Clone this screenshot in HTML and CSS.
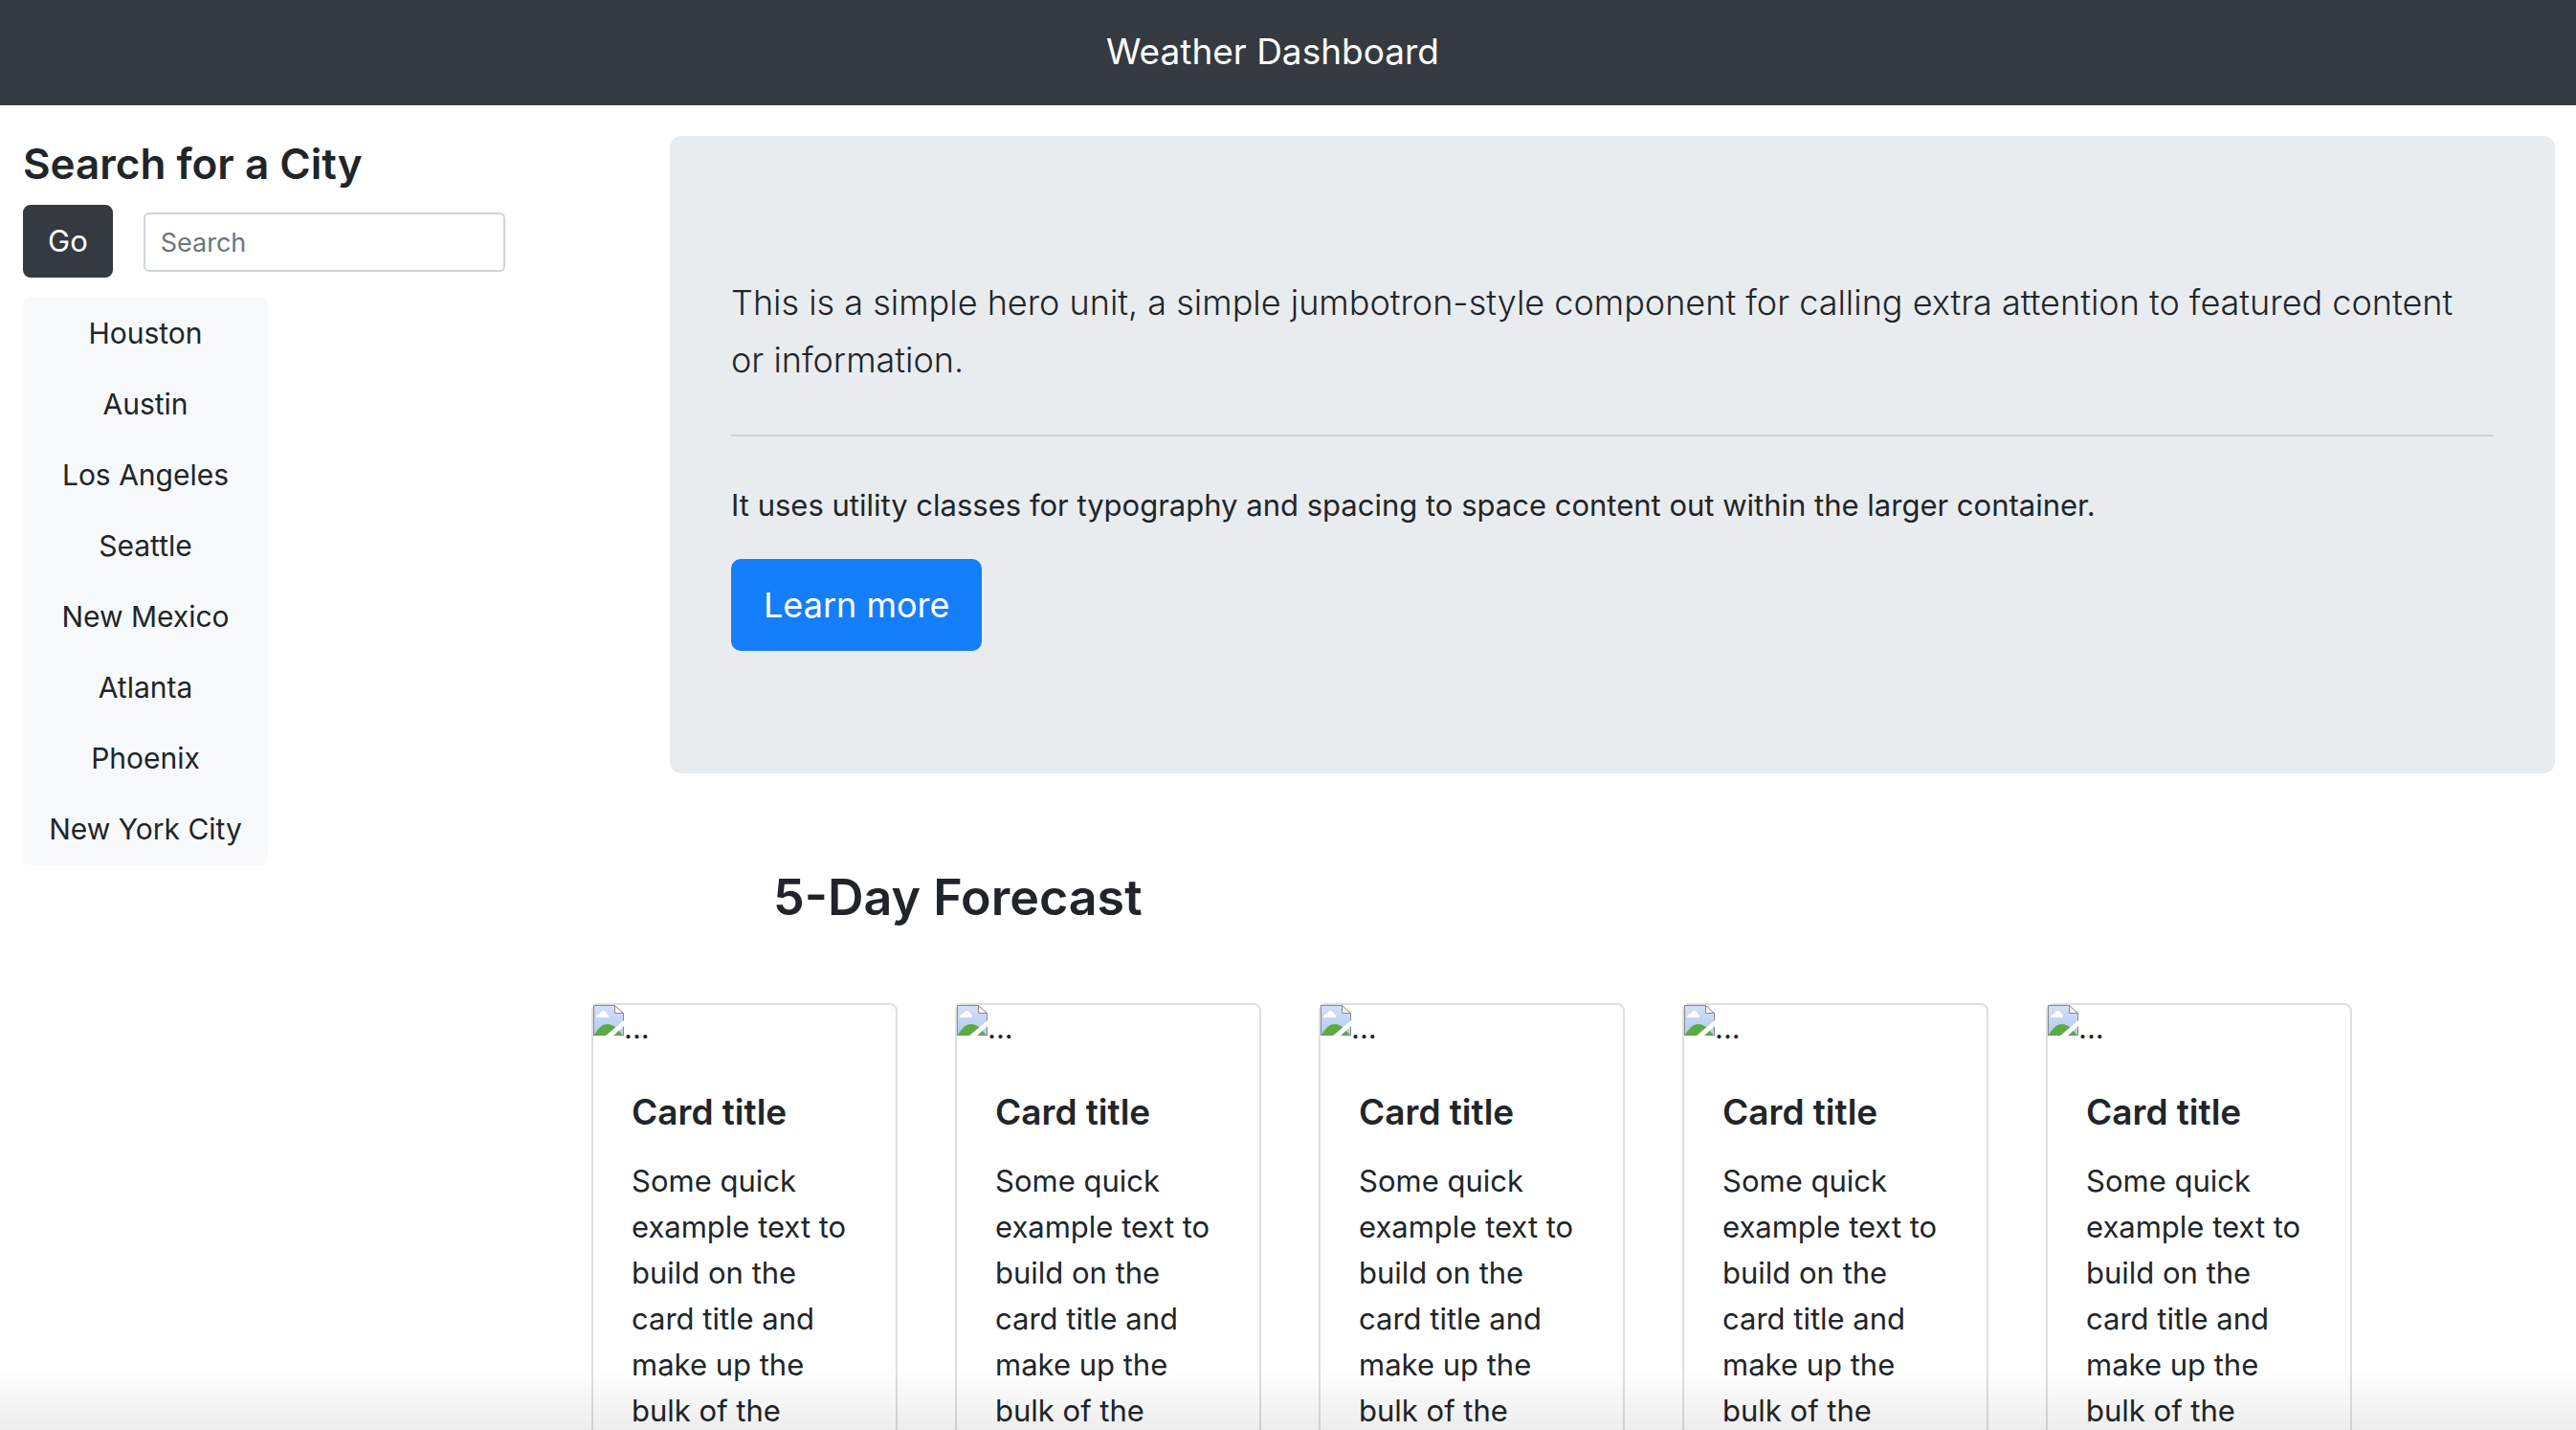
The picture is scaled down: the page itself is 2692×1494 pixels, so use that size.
FILE: index.html
```html
<!DOCTYPE html>
<html lang="en">
<head>
<meta charset="utf-8">
<title>Weather Dashboard</title>
<link rel="stylesheet" href="styles.css">
</head>
<body>
<svg class="sprite" aria-hidden="true">
  <defs>
    <linearGradient id="sky" x1="0" y1="0" x2="0" y2="1"><stop offset="0" stop-color="#d3e0f8"/><stop offset="1" stop-color="#b4caee"/></linearGradient>
    <symbol id="missing" viewBox="0 0 32 32">
      <path d="M.5.5H22.500L31.500 8.500V31.500H.5Z" fill="url(#sky)"/>
      <path d="M1 31C6 23 10 20 15 20C21 20 26 25 30 31Z" fill="#5aab41"/>
      <path d="M3 13C3 10 5 9 7 9C8 5 13 5 14 9C16 10 16 12 16 13Z" fill="#fff"/>
      <path d="M22 1V9H31Z" fill="#fff"/>
      <path d="M.5 32V.5H22.500L31.500 8.500V32M22.500.5V8.500H31.500M0 31.500H32" fill="none" stroke="#8a8a8a"/>
      <path d="M32 16V22L21 32H13Z" fill="#fff"/>
    </symbol>
  </defs>
</svg>

<header class="navbar"><a class="navbar-brand" href="#">Weather Dashboard</a></header>

<main>
  <div class="overview">
    <aside class="sidebar">
      <h3 class="sidebar-title">Search for a City</h3>
      <form class="search">
        <button class="search-button" type="button">Go</button>
        <input class="search-input" type="text" placeholder="Search" aria-label="Search">
      </form>
      <div class="cities">
        <button class="city" type="button">Houston</button>
        <button class="city" type="button">Austin</button>
        <button class="city" type="button">Los Angeles</button>
        <button class="city" type="button">Seattle</button>
        <button class="city" type="button">New Mexico</button>
        <button class="city" type="button">Atlanta</button>
        <button class="city" type="button">Phoenix</button>
        <button class="city" type="button">New York City</button>
      </div>
    </aside>
    <section class="hero">
      <p class="lead">This is a simple hero unit, a simple jumbotron-style component for calling extra attention to featured content or information.</p>
      <hr class="divider">
      <p class="hero-text">It uses utility classes for typography and spacing to space content out within the larger container.</p>
      <a class="hero-button" href="#">Learn more</a>
    </section>
  </div>

  <section class="forecast">
    <h2 class="forecast-title">5-Day Forecast</h2>
    <div class="cards">
      <article class="card">
        <div class="card-image"><svg class="missing-icon"><use href="#missing"/></svg>...</div>
        <div class="card-body"><h5 class="card-title">Card title</h5><p class="card-text">Some quick example text to build on the card title and make up the bulk of the</p></div>
      </article>
      <article class="card">
        <div class="card-image"><svg class="missing-icon"><use href="#missing"/></svg>...</div>
        <div class="card-body"><h5 class="card-title">Card title</h5><p class="card-text">Some quick example text to build on the card title and make up the bulk of the</p></div>
      </article>
      <article class="card">
        <div class="card-image"><svg class="missing-icon"><use href="#missing"/></svg>...</div>
        <div class="card-body"><h5 class="card-title">Card title</h5><p class="card-text">Some quick example text to build on the card title and make up the bulk of the</p></div>
      </article>
      <article class="card">
        <div class="card-image"><svg class="missing-icon"><use href="#missing"/></svg>...</div>
        <div class="card-body"><h5 class="card-title">Card title</h5><p class="card-text">Some quick example text to build on the card title and make up the bulk of the</p></div>
      </article>
      <article class="card">
        <div class="card-image"><svg class="missing-icon"><use href="#missing"/></svg>...</div>
        <div class="card-body"><h5 class="card-title">Card title</h5><p class="card-text">Some quick example text to build on the card title and make up the bulk of the</p></div>
      </article>
    </div>
  </section>
</main>
<div class="bottom-shade"></div>
</body>
</html>
```
FILE: styles.css
```css
* { box-sizing: border-box; }

body {
  margin: 0;
  height: 100vh;
  overflow-x: hidden;
  overflow-y: auto;
  scrollbar-width: none;
  background: #fff;
  color: #212529;
  font-family: Inter, "Liberation Sans", sans-serif;
  font-size: 31px;
  line-height: 48px;
}

button, input { font-family: inherit; }
h2, h3, h5, p { margin: 0; }
.sprite { position: absolute; width: 0; height: 0; }

/* Top bar */
.navbar {
  display: flex;
  justify-content: center;
  padding: 24px 64px 26px 32px;
  background: #343a40;
}
.navbar-brand {
  color: #fff;
  font-size: 37px;
  line-height: 60px;
  text-decoration: none;
}

/* Search column and hero */
.overview {
  display: grid;
  grid-template-columns: 676px 1fr;
  align-items: start;
  padding: 32px 22px 0 24px;
}
.sidebar-title {
  font-size: 44px;
  font-weight: 600;
  line-height: 58px;
}
.search {
  display: flex;
  align-items: center;
  gap: 32px;
  margin-top: 14px;
}
.search-button {
  padding: 12px 24px;
  border: 2px solid #343a40;
  border-radius: 8px;
  background: #343a40;
  color: #fff;
  font-size: 31px;
  line-height: 48px;
}
.search-input {
  width: 378px;
  height: 62px;
  margin-top: 2px;
  padding: 8px 16px;
  border: 2px solid #ced4da;
  border-radius: 6px;
  font-size: 27px;
}
.search-input::placeholder { color: #6c757d; opacity: 1; }
.cities {
  display: inline-flex;
  flex-direction: column;
  min-width: 256px;
  margin-top: 20px;
  padding-top: 2px;
  border-radius: 8px;
  background: #f8f9fa;
}
.city {
  padding: 12px 24px 14px;
  border: 0;
  background: none;
  color: #212529;
  font-size: 30px;
  line-height: 48px;
}

.hero {
  padding: 144px 64px 128px;
  border-radius: 12px;
  background: #e9ecef;
}
.lead {
  font-size: 36px;
  font-weight: 350;
  line-height: 60px;
}
.divider {
  margin: 48px 0;
  border: 0;
  border-top: 2px solid rgba(0, 0, 0, .1);
}
.hero-button {
  display: inline-block;
  margin-top: 32px;
  padding: 16px 32px;
  border: 2px solid #157efb;
  border-radius: 10px;
  background: #157efb;
  color: #fff;
  font-size: 36px;
  line-height: 60px;
  text-decoration: none;
}

/* Forecast */
.forecast-title {
  padding: 0 0 76px 808px;
  font-size: 52px;
  font-weight: 600;
  line-height: 68px;
}
.cards {
  display: flex;
  gap: 60px;
  padding-left: 618px;
}
.card {
  flex: 0 0 320px;
  border: 2px solid rgba(0, 0, 0, .125);
  border-radius: 8px;
}
.card-image { display: flex; }
.missing-icon { width: 32px; height: 32px; }
.card-body { padding: 40px; }
.card-title {
  margin-bottom: 24px;
  font-size: 37px;
  font-weight: 600;
  line-height: 48px;
}

.bottom-shade {
  position: fixed;
  right: 0;
  bottom: 0;
  left: 0;
  height: 64px;
  background: linear-gradient(rgba(0, 0, 0, 0), rgba(0, 0, 0, .07));
  pointer-events: none;
}
```
